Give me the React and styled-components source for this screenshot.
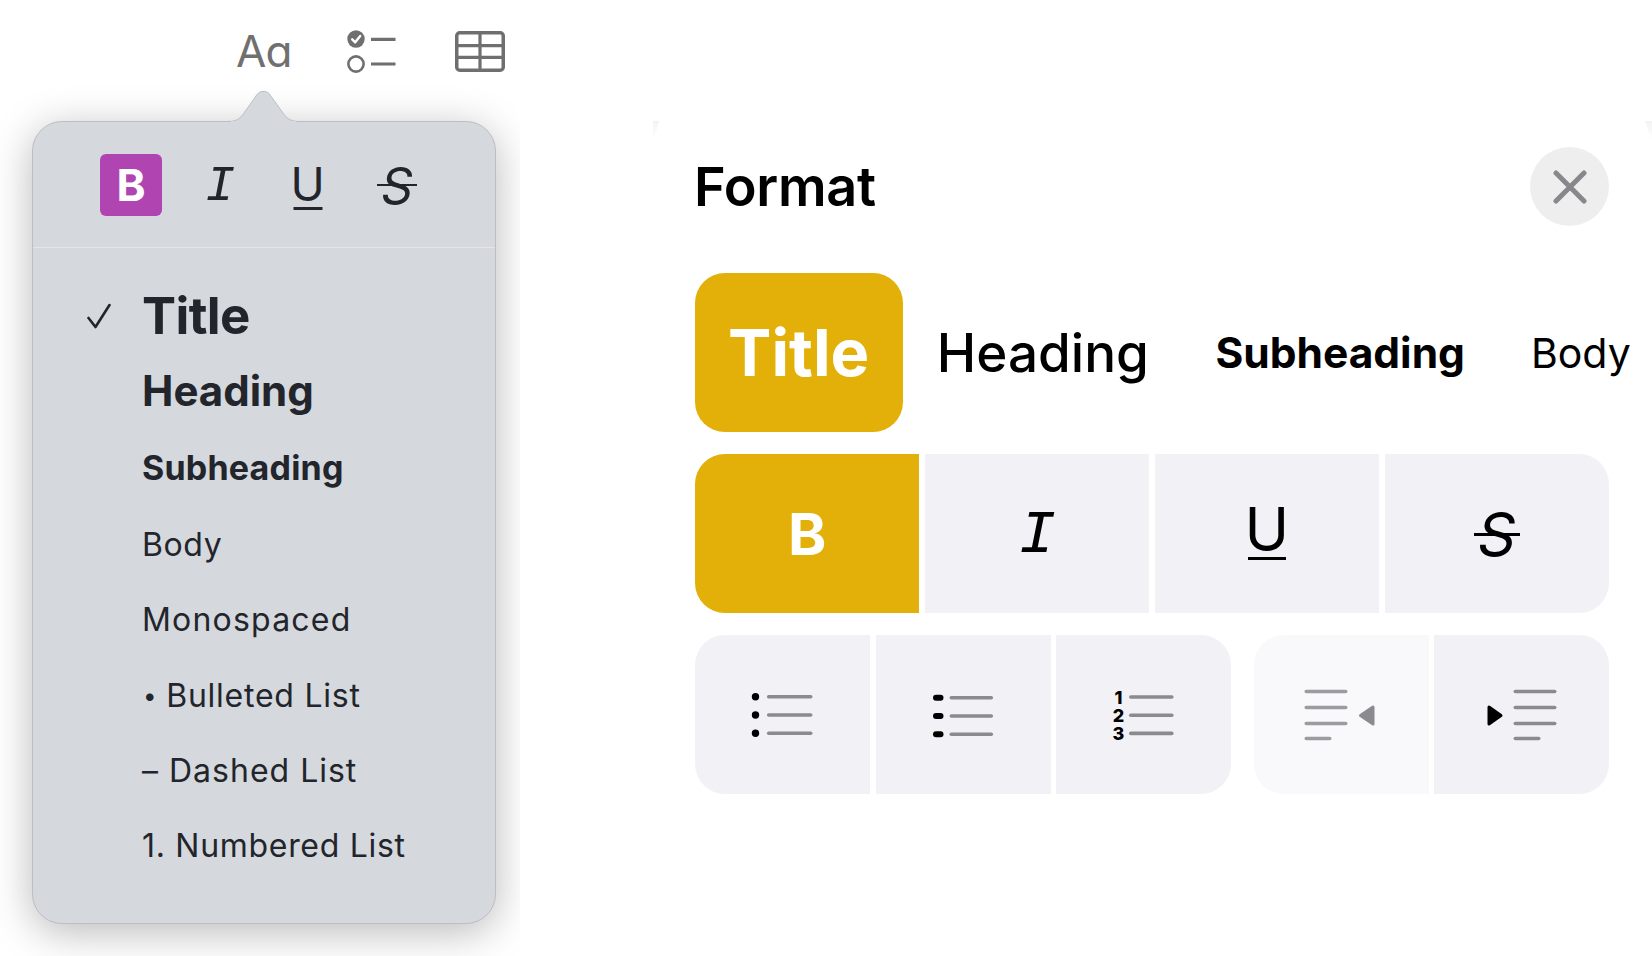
import React from "react";
import styled, { createGlobalStyle } from "styled-components";

const Global = createGlobalStyle`
  html, body { margin: 0; padding: 0; background: #fff; }
  body { font-family: Inter, "Liberation Sans", sans-serif; }
`;

const Page = styled.div`
  width: 1652px;
  height: 956px;
  display: flex;
  overflow: hidden;
  background: #fff;
`;

const LeftColumn = styled.div`
  width: 520px;
  height: 956px;
  flex: none;
  overflow: hidden;
`;

const Toolbar = styled.div`
  height: 91px;
  padding: 30px 0 0 236px;
  box-sizing: border-box;
  display: flex;
  align-items: flex-start;
`;

const AaLabel = styled.span`
  width: 53px;
  margin-right: 58px;
  font-size: 44px;
  line-height: 42px;
  font-weight: 400;
  color: #707070;
  letter-spacing: -0.9px;
  white-space: nowrap;
  font-feature-settings: "cv11" 1;
`;

const ToolIcon = styled.svg`
  flex: none;
  margin-right: ${(p) => p.$mr || 0}px;
  display: block;
`;

const Popover = styled.div`
  position: relative;
  width: 464px;
  height: 803px;
  margin-left: 32px;
  margin-top: 30px;
  box-sizing: border-box;
  background: #d5d8dd;
  border: 1px solid #bcbec1;
  border-radius: 30px;
  box-shadow: 0 8px 42px rgba(0, 0, 0, 0.28);
`;

const Notch = styled.svg`
  position: absolute;
  left: 195px;
  top: -33px;
  display: block;
`;

const FormatRow = styled.div`
  height: 126px;
  padding: 32px 0 0 67px;
  box-sizing: border-box;
  display: flex;
  border-bottom: 1.5px solid #e4e5e8;
`;

const BoldChip = styled.div`
  width: 62px;
  height: 62px;
  flex: none;
  border-radius: 6px;
  background: #b044b0;
  color: #fff;
  display: flex;
  align-items: center;
  justify-content: center;
  font-size: 44px;
  font-weight: 700;
  margin-right: 28px;
`;

const Glyph = styled.div`
  position: relative;
  width: 60px;
  height: 62px;
  flex: none;
  box-sizing: border-box;
  padding: ${(p) => p.$pt || 0}px 0 ${(p) => p.$pb || 0}px;
  display: flex;
  align-items: center;
  justify-content: center;
  margin-right: ${(p) => p.$mr || 0}px;
  font-family: ${(p) => (p.$mono ? '"Liberation Mono", monospace' : "Inter, sans-serif")};
  font-style: ${(p) => (p.$italic ? "italic" : "normal")};
  font-size: ${(p) => p.$size}px;
  font-weight: 400;
  line-height: 1;
  color: #22252b;
`;

const GlyphBar = styled.span`
  position: absolute;
  left: 50%;
  top: ${(p) => p.$top}px;
  width: ${(p) => p.$w}px;
  height: ${(p) => p.$h}px;
  transform: translateX(-50%);
  background: ${(p) => p.$color};
`;

const Menu = styled.div`
  padding-top: 30px;
`;

const MenuRow = styled.div`
  height: 75.4px;
  margin-top: ${(p) => p.$mt || 0}px;
  display: flex;
  align-items: center;
  color: #22252b;
  white-space: nowrap;
  font-size: ${(p) => p.$fs}px;
  font-weight: ${(p) => p.$fw};
  letter-spacing: ${(p) => p.$ls || 0}px;
`;

const CheckCell = styled.div`
  width: 109px;
  flex: none;
  display: flex;
  padding-left: 54px;
  box-sizing: border-box;
`;

const SmallBullet = styled.span`
  font-size: 24px;
  margin: 0 9px 0 1px;
`;

const RightPanel = styled.div`
  margin: 121px 0 0 133px;
  width: 999px;
  min-width: 0;
  flex: none;
  height: 835px;
  box-sizing: border-box;
  padding: 26px 43px 0 42px;
  position: relative;
  background: #fff;
  &::before,
  &::after {
    content: "";
    position: absolute;
    top: 0;
    background: linear-gradient(to bottom, #f3f3f3, #ffffff);
  }
  &::before {
    left: 0;
    width: 6px;
    height: 21px;
    clip-path: polygon(0 0, 100% 0, 0 100%);
  }
  &::after {
    right: 0;
    width: 7px;
    height: 19px;
    clip-path: polygon(0 0, 100% 0, 100% 100%);
  }
`;

const Header = styled.div`
  display: flex;
  align-items: center;
  justify-content: space-between;
  height: 79px;
`;

const PanelTitle = styled.h2`
  margin: 0 0 0 -1px;
  font-size: 54px;
  font-weight: 600;
  color: #000;
  letter-spacing: -0.3px;
`;

const CloseButton = styled.div`
  width: 79px;
  height: 79px;
  border-radius: 50%;
  background: #eeeeef;
  display: flex;
  align-items: center;
  justify-content: center;
`;

const StyleRow = styled.div`
  display: flex;
  margin-top: 47px;
  height: 159px;
  white-space: nowrap;
`;

const StyleChip = styled.div`
  display: flex;
  flex: none;
  align-items: center;
  padding: 0 ${(p) => p.$padR || p.$pad}px 0 ${(p) => p.$pad}px;
  border-radius: 30px;
  font-size: ${(p) => p.$fs}px;
  font-weight: ${(p) => p.$fw};
  color: ${(p) => (p.$active ? "#fff" : "#000")};
  background: ${(p) => (p.$active ? "#e3b009" : "transparent")};
`;

const SegmentRow = styled.div`
  display: flex;
  gap: ${(p) => p.$gap}px;
  margin-top: 22px;
`;

const SegmentGroup = styled.div`
  display: flex;
  gap: 5.5px;
  flex: ${(p) => p.$flex || 1};
  height: 159px;
  border-radius: 30px;
  overflow: hidden;
`;

const Segment = styled.div`
  flex: 1;
  position: relative;
  box-sizing: border-box;
  padding: ${(p) => p.$pt || 0}px 0 ${(p) => p.$pb || 0}px;
  display: flex;
  align-items: center;
  justify-content: center;
  background: ${(p) => (p.$active ? "#e3b009" : p.$disabled ? "#f9f9fb" : "#f2f1f6")};
  color: ${(p) => (p.$active ? "#fff" : "#000")};
  font-size: ${(p) => p.$fs || 58}px;
  line-height: 1;
  font-weight: ${(p) => (p.$bold ? 700 : 400)};
  font-style: ${(p) => (p.$italic ? "italic" : "normal")};
  font-family: ${(p) => (p.$mono ? '"Liberation Mono", monospace' : "Inter, sans-serif")};
`;

const ListSvg = styled.svg`
  display: block;
  overflow: visible;
  margin-top: ${(p) => p.$mt || 0}px;
`;

const CheckIcon = () => (
  <ToolIcon width="50" height="46" viewBox="0 0 50 46" $mr={58}>
    <circle cx="9" cy="9" r="8.7" fill="#6f6f6f" />
    <path d="M5.2 9.3l3 3 5-6.4" fill="none" stroke="#fff" strokeWidth="2.4" strokeLinecap="round" strokeLinejoin="round" />
    <circle cx="9" cy="34" r="7.6" fill="none" stroke="#6f6f6f" strokeWidth="2.6" />
    <path d="M24 9.3h24.5M24 34h24.5" stroke="#6f6f6f" strokeWidth="3.2" />
  </ToolIcon>
);

const TableIcon = () => (
  <ToolIcon width="50" height="42" viewBox="0 0 50 42">
    <rect x="1.75" y="2.75" width="46.5" height="37.5" rx="3" fill="none" stroke="#6f6f6f" strokeWidth="3.5" />
    <path d="M1.5 15.7h47M1.5 27.3h47M25 2.5v37.5" stroke="#6f6f6f" strokeWidth="3.2" />
  </ToolIcon>
);

const ListLines = ({ x, w, ys }) =>
  ys.map((y) => <line key={y} x1={x} x2={x + w} y1={y} y2={y} stroke="#8b8a8f" strokeWidth="3.6" strokeLinecap="round" />);

const BulletIcon = () => (
  <ListSvg width="60" height="50" viewBox="0 0 60 50">
    {[6.8, 25, 43.2].map((y) => <circle key={y} cx="2.5" cy={y} r="3.7" fill="#000" />)}
    <ListLines x={15.7} w={42} ys={[6.8, 25, 43.2]} />
  </ListSvg>
);

const DashIcon = () => (
  <ListSvg width="60" height="50" viewBox="0 0 60 50" $mt={2}>
    {[6.8, 25, 43.2].map((y) => <line key={y} x1="3" x2="7.5" y1={y} y2={y} stroke="#000" strokeWidth="6" strokeLinecap="round" />)}
    <ListLines x={18.3} w={40} ys={[6.8, 25, 43.2]} />
  </ListSvg>
);

const NumberIcon = () => (
  <ListSvg width="60" height="56" viewBox="0 0 60 56" $mt={1}>
    {[1, 2, 3].map((n, i) => (
      <text key={n} x="4.5" y={16.6 + i * 18.2} textAnchor="middle" fontFamily="Inter, sans-serif" fontWeight="800" fontSize="18" fill="#000">{n}</text>
    ))}
    <ListLines x={16.8} w={41} ys={[10, 28.2, 46.4]} />
  </ListSvg>
);

const IndentIcon = ({ dir, disabled }) => {
  const line = disabled ? "#9c9ca0" : "#8b8a8f";
  const ys = [4.5, 20.5, 36.5, 51.5];
  const left = dir === "left";
  const x1 = left ? 1.3 : 29.3;
  const x2 = left ? 40.7 : 68.7;
  const xShort = left ? 24.7 : 52.7;
  const arrow = left ? "55.5,28.5 68,20 68,37" : "3,20 3,37 15,28.5";
  const arrowColor = left ? "#8b8a8f" : "#000";
  return (
    <ListSvg width="72" height="56" viewBox="0 0 72 56">
      {ys.map((y, i) => (
        <line key={y} x1={x1} x2={i === 3 ? xShort : x2} y1={y} y2={y} stroke={line} strokeWidth="3.6" strokeLinecap="round" />
      ))}
      <polygon points={arrow} fill={arrowColor} stroke={arrowColor} strokeWidth="3" strokeLinejoin="round" />
    </ListSvg>
  );
};

const menu = [
  { label: "Title", fs: 51, fw: 700, ls: -0.6, check: true },
  { label: "Heading", fs: 42, fw: 700, ls: 0, mt: -1 },
  { label: "Subheading", fs: 34, fw: 700, ls: 0.2, mt: 2 },
  { label: "Body", fs: 32, fw: 400, ls: 0.6, mt: 1.5 },
  { label: "Monospaced", fs: 32, fw: 400, ls: 1.2 },
  { label: "Bulleted List", fs: 32, fw: 400, ls: 0.75, bullet: true },
  { label: "– Dashed List", fs: 32, fw: 400, ls: 1 },
  { label: "1. Numbered List", fs: 32, fw: 400, ls: 0.7 },
];

export default function App() {
  return (
    <Page>
      <Global />
      <LeftColumn>
        <Toolbar>
          <AaLabel>Aa</AaLabel>
          <CheckIcon />
          <TableIcon />
        </Toolbar>
        <Popover>
          <Notch width="72" height="35" viewBox="0 0 72 35">
            <path d="M0 32.5C7 32.5 11 30.5 15 25.5L29 5.5C32 1.5 38 1.5 41 4.5L56 25.5C60 30.5 64 32.5 71 32.5" fill="#d5d8dd" stroke="#bcbec1" strokeWidth="1" />
            <rect x="3" y="32" width="65" height="3" fill="#d5d8dd" />
          </Notch>
          <FormatRow>
            <BoldChip>B</BoldChip>
            <Glyph $size={50} $mono $italic $pt={4} $mr={27.5}>I</Glyph>
            <Glyph $size={46} $pb={3} $mr={29.5}>
              U
              <GlyphBar $top={53} $w={29} $h={3} $color="#22252b" />
            </Glyph>
            <Glyph $size={50} $italic $pt={2}>
              S
              <GlyphBar $top={30} $w={40} $h={2} $color="#22252b" />
            </Glyph>
          </FormatRow>
          <Menu>
            {menu.map((m) => (
              <MenuRow key={m.label} $fs={m.fs} $fw={m.fw} $ls={m.ls} $mt={m.mt}>
                <CheckCell>
                  {m.check && (
                    <svg width="24" height="26" viewBox="0 0 24 26">
                      <path d="M1.5 15l7 9L22.5 2" fill="none" stroke="#22252b" strokeWidth="2.6" strokeLinecap="round" strokeLinejoin="round" />
                    </svg>
                  )}
                </CheckCell>
                {m.bullet && <SmallBullet>•</SmallBullet>}
                {m.label}
              </MenuRow>
            ))}
          </Menu>
        </Popover>
      </LeftColumn>
      <RightPanel>
        <Header>
          <PanelTitle>Format</PanelTitle>
          <CloseButton>
            <svg width="34" height="34" viewBox="0 0 34 34">
              <path d="M3 3l28 28M31 3L3 31" stroke="#88888c" strokeWidth="5" strokeLinecap="round" />
            </svg>
          </CloseButton>
        </Header>
        <StyleRow>
          <StyleChip $active $pad={33} $padR={34} $fs={65} $fw={700}>Title</StyleChip>
          <StyleChip $pad={33.5} $fs={53} $fw={500}>Heading</StyleChip>
          <StyleChip $pad={33} $fs={42.5} $fw={700}>Subheading</StyleChip>
          <StyleChip $pad={33} $fs={41} $fw={400}>Body</StyleChip>
        </StyleRow>
        <SegmentRow $gap={0}>
          <SegmentGroup>
            <Segment $active $bold>B</Segment>
            <Segment $italic $mono $fs={62} $pt={4}>I</Segment>
            <Segment $fs={60} $pb={10}>
              U
              <GlyphBar $top={103} $w={38} $h={3} $color="#000" />
            </Segment>
            <Segment $italic $fs={60} $pt={1}>
              S
              <GlyphBar $top={79} $w={46} $h={2.5} $color="#000" />
            </Segment>
          </SegmentGroup>
        </SegmentRow>
        <SegmentRow $gap={23}>
          <SegmentGroup $flex={536}>
            <Segment><BulletIcon /></Segment>
            <Segment><DashIcon /></Segment>
            <Segment><NumberIcon /></Segment>
          </SegmentGroup>
          <SegmentGroup $flex={355}>
            <Segment $disabled><IndentIcon dir="left" disabled /></Segment>
            <Segment><IndentIcon dir="right" /></Segment>
          </SegmentGroup>
        </SegmentRow>
      </RightPanel>
    </Page>
  );
}
